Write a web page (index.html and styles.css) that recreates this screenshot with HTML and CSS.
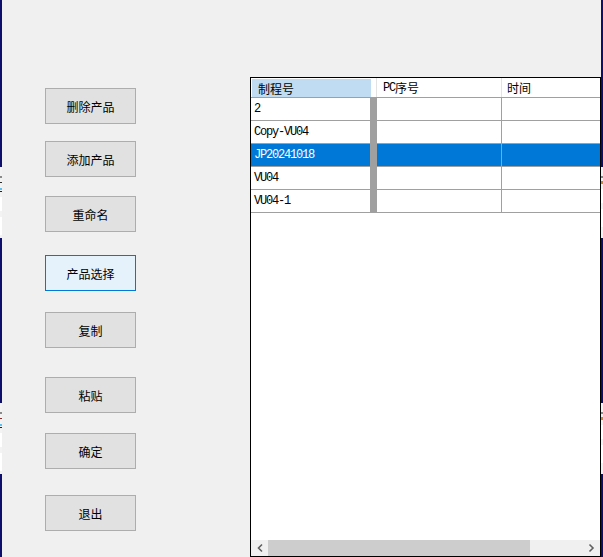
FILE: index.html
```html
<!DOCTYPE html>
<html lang="zh-CN">
<head>
<meta charset="utf-8">
<title>产品管理</title>
<link rel="stylesheet" href="styles.css">
</head>
<body>
<div class="screen">
  <div class="edge">
    <div class="navy top"></div>
    <div class="gap">
      <i class="bit b-gray"></i><i class="bit b-dark"></i><i class="bit b-blue"></i><i class="bit b-dark2"></i><i class="bit b-white"></i><i class="bit b-white2"></i>
    </div>
    <div class="navy mid"></div>
    <div class="gap">
      <i class="bit b-gray"></i><i class="bit b-red"></i><i class="bit b-blue"></i><i class="bit b-dark2"></i><i class="bit b-white"></i><i class="bit b-white2"></i>
    </div>
    <div class="navy rest"></div>
  </div>

  <div class="main">
    <div class="buttons">
      <button class="btn">删除产品</button>
      <button class="btn">添加产品</button>
      <button class="btn">重命名</button>
      <button class="btn focused">产品选择</button>
      <button class="btn">复制</button>
      <button class="btn">粘贴</button>
      <button class="btn">确定</button>
      <button class="btn">退出</button>
    </div>

    <div class="grid">
      <div class="row head">
        <div class="cell c1"><span class="hsel">制程号</span></div>
        <div class="hbar"></div>
        <div class="cell c2"><span class="latin">PC</span>序号</div>
        <div class="hline"></div>
        <div class="cell c3">时间</div>
      </div>
      <div class="row">
        <div class="cell c1">2</div><div class="bar"></div><div class="cell c2"></div><div class="vline"></div><div class="cell c3"></div>
      </div>
      <div class="row">
        <div class="cell c1">Copy-VU04</div><div class="bar"></div><div class="cell c2"></div><div class="vline"></div><div class="cell c3"></div>
      </div>
      <div class="row sel">
        <div class="cell c1">JP20241018</div><div class="bar"></div><div class="cell c2"></div><div class="vline"></div><div class="cell c3"></div>
      </div>
      <div class="row">
        <div class="cell c1">VU04</div><div class="bar"></div><div class="cell c2"></div><div class="vline"></div><div class="cell c3"></div>
      </div>
      <div class="row">
        <div class="cell c1">VU04-1</div><div class="bar"></div><div class="cell c2"></div><div class="vline"></div><div class="cell c3"></div>
      </div>
      <div class="fill"></div>
      <div class="hscroll">
        <div class="arrow">
          <svg width="17" height="16" viewBox="0 0 17 16"><path d="M11 4.5 L7.5 8 L11 11.5" fill="none" stroke="#606060" stroke-width="1.6"/></svg>
        </div>
        <div class="thumb"></div>
        <div class="track"></div>
        <div class="arrow">
          <svg width="17" height="16" viewBox="0 0 17 16"><path d="M6.5 4.5 L10 8 L6.5 11.5" fill="none" stroke="#606060" stroke-width="1.6"/></svg>
        </div>
      </div>
    </div>
  </div>

  <div class="edge right">
    <div class="navy top"></div>
    <div class="gap">
      <i class="bit b-gray"></i><i class="bit b-orange"></i><i class="bit b-white"></i><i class="bit b-white2"></i>
    </div>
    <div class="navy mid"></div>
    <div class="gap">
      <i class="bit b-gray"></i><i class="bit b-orange"></i><i class="bit b-white"></i><i class="bit b-white2"></i>
    </div>
    <div class="navy rest"></div>
  </div>
</div>
</body>
</html>
```

FILE: styles.css
```css
html, body {
  margin: 0;
  padding: 0;
}

body {
  background: #f0f0f0;
  width: 603px;
  height: 557px;
  overflow: hidden;
  font-family: "Noto Sans CJK SC", "Noto Sans", sans-serif;
}

.screen {
  display: flex;
  height: 557px;
}

/* window edges behind the dialog */
.edge {
  width: 2px;
  flex: none;
  display: flex;
  flex-direction: column;
}

.navy {
  background: #0d0f6b;
}

.navy.top { height: 167px; }
.navy.mid { height: 165px; }
.navy.rest { flex: 1; }

.gap {
  height: 71px;
  background: #f3f3f3;
  display: flex;
  flex-direction: column;
}

.bit { display: block; }
.b-gray { height: 2px; margin-top: 9px; background: #8a8a8a; }
.b-dark { height: 1px; margin-top: 4px; background: #2a2a2a; }
.b-red { height: 1px; margin-top: 4px; background: #8a2a2a; }
.b-blue { height: 2px; margin-top: 5px; background: #5cc0f0; }
.b-dark2 { height: 1px; margin-top: 1px; background: #222; }
.b-orange { height: 3px; margin-top: 3px; background: #e0821e; }
.b-white { height: 14px; margin-top: 5px; background: #ffffff; }
.b-white2 { height: 18px; margin-top: 6px; background: #ffffff; }

/* main area */
.main {
  flex: 1;
  display: flex;
  align-items: flex-start;
}

.buttons {
  margin-left: 43px;
  margin-top: 88px;
  width: 91px;
  display: flex;
  flex-direction: column;
}

.btn {
  width: 91px;
  height: 36px;
  box-sizing: border-box;
  border: 1px solid #adadad;
  background: #e1e1e1;
  color: #000;
  font-family: "Noto Sans CJK SC", sans-serif;
  font-size: 12px;
  padding: 0;
  margin: 0;
}

.btn.focused {
  border-color: #0078d7;
  background: #e5f1fb;
}

.btn:nth-child(2) { margin-top: 17px; }
.btn:nth-child(3) { margin-top: 19px; }
.btn:nth-child(4) { margin-top: 23px; }
.btn:nth-child(5) { margin-top: 21px; }
.btn:nth-child(6) { margin-top: 29px; }
.btn:nth-child(7) { margin-top: 20px; }
.btn:nth-child(8) { margin-top: 26px; }

/* data grid */
.grid {
  margin-left: 114px;
  margin-top: 77px;
  width: 351px;
  height: 480px;
  box-sizing: border-box;
  border: 1px solid #000;
  background: #fff;
  display: flex;
  flex-direction: column;
}

.row {
  display: flex;
  height: 23px;
  flex: none;
  box-sizing: border-box;
  border-bottom: 1px solid #a0a0a0;
}

.cell {
  box-sizing: border-box;
  display: flex;
  align-items: center;
  overflow: hidden;
  white-space: nowrap;
  font-family: "Liberation Mono", "DejaVu Sans Mono", monospace;
  font-size: 12px;
  letter-spacing: -1.2px;
  color: #000;
  padding-left: 3px;
}

.c1 { width: 119px; }
.c2 { width: 124px; }
.c3 { flex: 1; }

.bar {
  width: 7px;
  background: #a0a0a0;
}

.vline {
  width: 1px;
  background: #a0a0a0;
}

.row.sel .cell {
  background: #0078d7;
  color: #fff;
}

/* header */
.row.head {
  height: 20px;
}

.head .cell {
  font-family: "Noto Sans CJK SC", sans-serif;
  font-size: 12px;
  letter-spacing: 0;
  align-items: stretch;
}

.head .latin {
  font-family: "Liberation Mono", monospace;
  letter-spacing: -1.2px;
}

.head .c1 {
  width: 120px;
  padding: 1px 0 0 1px;
}

.hsel {
  flex: 1;
  background: #bfdcf3;
  padding-left: 6px;
  display: flex;
  align-items: center;
}

.head .c2 {
  width: 124px;
  padding-left: 6px;
  align-items: center;
}

.head .c3 {
  padding-left: 5px;
  align-items: center;
}

.hbar {
  width: 6px;
  box-sizing: border-box;
  border-right: 1px solid #e3e3e3;
}

.hline {
  width: 1px;
  background: #e3e3e3;
}

.fill {
  flex: 1;
}

/* horizontal scrollbar */
.hscroll {
  height: 16px;
  flex: none;
  display: flex;
  background: #f0f0f0;
}

.arrow {
  width: 17px;
  height: 16px;
  display: flex;
}

.thumb {
  width: 262px;
  background: #cdcdcd;
}

.track {
  flex: 1;
}
```
